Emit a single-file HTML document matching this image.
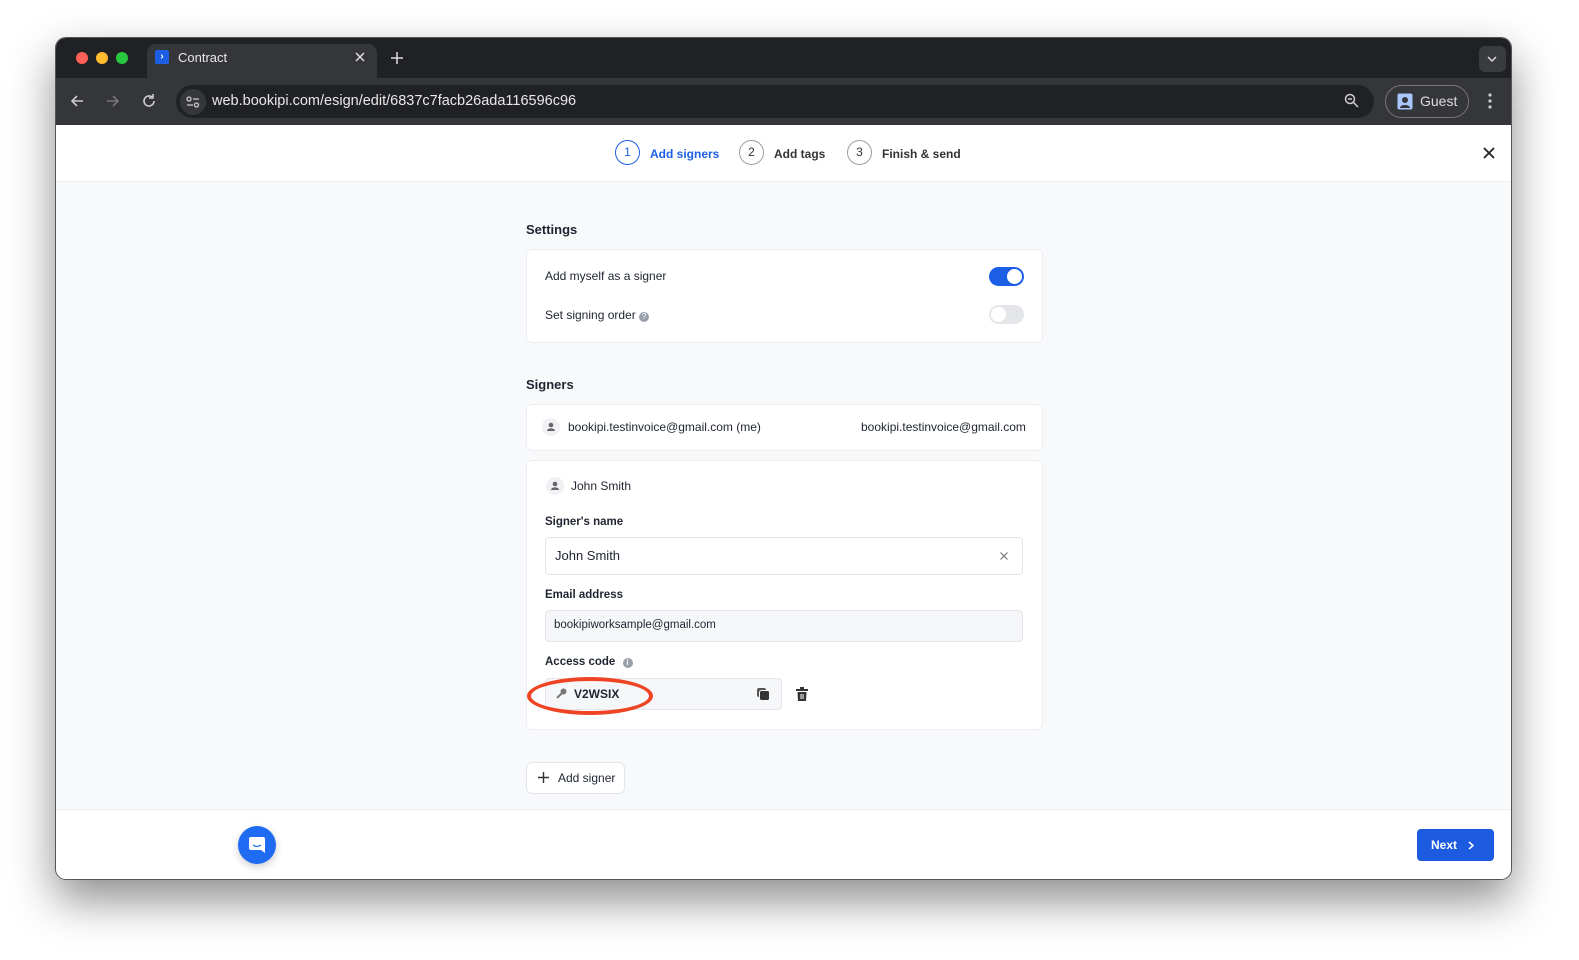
<!DOCTYPE html>
<html><head><meta charset="utf-8"><style>
*{box-sizing:border-box;margin:0;padding:0}
html,body{width:1579px;height:960px}
body{background:#fff;font-family:"Liberation Sans",sans-serif;position:relative;overflow:hidden}
.a{position:absolute}
.win{left:55px;top:37px;width:1457px;height:843px;border-radius:11px;overflow:hidden;background:#f8f9fb;box-shadow:0 20px 45px rgba(0,0,0,.45);border:1px solid #555}
.t{font-size:12px;color:#1f2430}
.b{font-weight:bold}
.card{background:#fff;border:1px solid #eceef2;border-radius:6px}
.tog{width:35px;height:19px;border-radius:10px}
.step{width:25px;height:25px;border-radius:50%;border:1px solid #9aa0aa;font-size:12px;text-align:center;line-height:23px;color:#333}
</style></head><body>
<div class="a win">
 <div class="a" style="left:0;top:0;width:1457px;height:40px;background:#202124"></div>
 <div class="a" style="left:20px;top:14px;width:12px;height:12px;border-radius:50%;background:#fe5f57"></div>
 <div class="a" style="left:40px;top:14px;width:12px;height:12px;border-radius:50%;background:#febc2e"></div>
 <div class="a" style="left:60px;top:14px;width:12px;height:12px;border-radius:50%;background:#28c840"></div>
 <div class="a" style="left:91px;top:6px;width:230px;height:36px;background:#35363a;border-radius:9px 9px 0 0"></div>
 <div class="a" style="left:99px;top:12px;width:14px;height:14px;background:#1c5fe5;border-radius:2px;color:#fff;font-size:10px;font-weight:bold;text-align:center;line-height:14px">&#8250;</div>
 <div class="a" style="left:122px;top:12px;color:#e8e8e8;font-size:13px">Contract</div>
 <svg class="a" style="left:299px;top:14px" width="10" height="10"><path d="M1 1L9 9M9 1L1 9" stroke="#ddd" stroke-width="1.5"/></svg>
 <svg class="a" style="left:335px;top:14px" width="12" height="12"><path d="M6 0V12M0 6H12" stroke="#ddd" stroke-width="1.5"/></svg>
 <div class="a" style="left:1423px;top:8px;width:27px;height:26px;background:#3a3b3e;border-radius:6px"></div>
 <svg class="a" style="left:1431px;top:17px" width="10" height="8"><path d="M1 2L5 6L9 2" stroke="#ddd" stroke-width="1.5" fill="none"/></svg>
 <div class="a" style="left:0;top:40px;width:1457px;height:47px;background:#35363a"></div>
 <svg class="a" style="left:14px;top:56px" width="14" height="14"><path d="M13 7H2M7 2L2 7L7 12" stroke="#ccc" stroke-width="1.6" fill="none"/></svg>
 <svg class="a" style="left:50px;top:56px" width="14" height="14"><path d="M1 7H12M7 2L12 7L7 12" stroke="#777" stroke-width="1.6" fill="none"/></svg>
 <svg class="a" style="left:86px;top:56px" width="14" height="14"><path d="M12 7A5 5 0 1 1 10 3M11 0V4H7" stroke="#ccc" stroke-width="1.6" fill="none"/></svg>
 <div class="a" style="left:120px;top:47px;width:1198px;height:33px;background:#202124;border-radius:17px"></div>
 <div class="a" style="left:124px;top:51px;width:26px;height:26px;background:#36373a;border-radius:50%"></div>
 <svg class="a" style="left:130px;top:57px" width="14" height="14"><circle cx="3" cy="4" r="2" stroke="#ccc" fill="none" stroke-width="1.3"/><path d="M7 4H13M1 10H7" stroke="#ccc" stroke-width="1.3"/><circle cx="10.5" cy="10" r="2" stroke="#ccc" fill="none" stroke-width="1.3"/></svg>
 <div class="a" style="left:156px;top:55px;color:#e8e8e8;font-size:14.5px">web.bookipi.com/esign/edit/6837c7facb26ada116596c96</div>
 <svg class="a" style="left:1288px;top:55px" width="16" height="16"><circle cx="6" cy="6" r="4.5" stroke="#ccc" fill="none" stroke-width="1.5"/><path d="M9.5 9.5L14 14M4 6H8" stroke="#ccc" stroke-width="1.5"/></svg>
 <div class="a" style="left:1329px;top:47px;width:84px;height:33px;border:1px solid #777;border-radius:17px"></div>
 <svg class="a" style="left:1341px;top:55px" width="16" height="17"><rect x="0.5" y="0.5" width="15" height="16" rx="2" fill="#a8c7fa"/><circle cx="8" cy="7" r="3" fill="#35363a"/><path d="M3 15C3 11 13 11 13 15" fill="#35363a"/></svg>
 <div class="a" style="left:1364px;top:55px;color:#ddd;font-size:14px">Guest</div>
 <svg class="a" style="left:1432px;top:55px" width="4" height="16"><circle cx="2" cy="2" r="1.6" fill="#ccc"/><circle cx="2" cy="8" r="1.6" fill="#ccc"/><circle cx="2" cy="14" r="1.6" fill="#ccc"/></svg>
 <!-- header -->
 <div class="a" style="left:0;top:87px;width:1457px;height:57px;background:#fff;border-bottom:1px solid #eceef2"></div>
 <div class="a step" style="left:559px;top:102px;border-color:#1c5fe5;color:#1c5fe5">1</div>
 <div class="a t b" style="left:594px;top:109px;color:#1c5fe5">Add signers</div>
 <div class="a step" style="left:683px;top:102px">2</div>
 <div class="a t b" style="left:718px;top:109px;color:#333">Add tags</div>
 <div class="a step" style="left:791px;top:102px">3</div>
 <div class="a t b" style="left:826px;top:109px;color:#333">Finish &amp; send</div>
 <svg class="a" style="left:1427px;top:109px" width="12" height="12"><path d="M1 1L11 11M11 1L1 11" stroke="#222" stroke-width="1.8"/></svg>
 <!-- settings -->
 <div class="a b" style="left:470px;top:184px;font-size:13px;color:#1f2430">Settings</div>
 <div class="a card" style="left:470px;top:211px;width:517px;height:94px"></div>
 <div class="a t" style="left:489px;top:231px">Add myself as a signer</div>
 <div class="a tog" style="left:933px;top:229px;background:#1c5fe5"><div class="a" style="left:18px;top:2px;width:15px;height:15px;border-radius:50%;background:#fff"></div></div>
 <div class="a t" style="left:489px;top:270px">Set signing order <span style="display:inline-block;width:10px;height:10px;border-radius:50%;background:#9aa0aa;color:#fff;font-size:8px;text-align:center;line-height:10px;vertical-align:0">?</span></div>
 <div class="a tog" style="left:933px;top:267px;background:#e4e6ea"><div class="a" style="left:2px;top:2px;width:15px;height:15px;border-radius:50%;background:#fff"></div></div>
 <div class="a b" style="left:470px;top:339px;font-size:13px;color:#1f2430">Signers</div>
 <div class="a card" style="left:470px;top:366px;width:517px;height:47px"></div>
 <svg class="a" style="left:486px;top:380px" width="18" height="18"><circle cx="9" cy="9" r="9" fill="#f0f1f4"/><circle cx="9" cy="7" r="2.3" fill="#666"/><path d="M5 13C5 9.5 13 9.5 13 13Z" fill="#666"/></svg>
 <div class="a t" style="left:512px;top:382px">bookipi.testinvoice@gmail.com (me)</div>
 <div class="a t" style="left:805px;top:382px">bookipi.testinvoice@gmail.com</div>
 <div class="a card" style="left:470px;top:422px;width:517px;height:270px"></div>
 <svg class="a" style="left:490px;top:439px" width="18" height="18"><circle cx="9" cy="9" r="9" fill="#f0f1f4"/><circle cx="9" cy="7" r="2.3" fill="#666"/><path d="M5 13C5 9.5 13 9.5 13 13Z" fill="#666"/></svg>
 <div class="a t" style="left:515px;top:441px">John Smith</div>
 <div class="a t b" style="left:489px;top:478px;font-size:11.5px">Signer's name</div>
 <div class="a" style="left:489px;top:499px;width:478px;height:38px;background:#fff;border:1px solid #e3e5ea;border-radius:4px"></div>
 <div class="a" style="left:499px;top:510px;font-size:13px;color:#1f2430">John Smith</div>
 <svg class="a" style="left:944px;top:514px" width="8" height="8"><path d="M0.5 0.5L7.5 7.5M7.5 0.5L0.5 7.5" stroke="#777" stroke-width="1.2"/></svg>
 <div class="a t b" style="left:489px;top:551px;font-size:11.5px">Email address</div>
 <div class="a" style="left:489px;top:572px;width:478px;height:32px;background:#f6f7f9;border:1px solid #e3e5ea;border-radius:4px"></div>
 <div class="a t" style="left:498px;top:581px;font-size:11.5px">bookipiworksample@gmail.com</div>
 <div class="a t b" style="left:489px;top:618px;font-size:11.5px">Access code <span style="display:inline-block;width:10px;height:10px;border-radius:50%;background:#9aa0aa;color:#fff;font-size:8px;text-align:center;line-height:10px;margin-left:4px">i</span></div>
 <div class="a" style="left:489px;top:640px;width:237px;height:32px;background:#f6f7f9;border:1px solid #e3e5ea;border-radius:4px"></div>
 <svg class="a" style="left:500px;top:650px" width="11" height="11"><circle cx="7.5" cy="3.5" r="3" fill="#777"/><path d="M6 5L1 10" stroke="#777" stroke-width="2"/></svg>
 <div class="a t b" style="left:518px;top:649px">V2WSIX</div>
 <svg class="a" style="left:701px;top:650px" width="13" height="13"><rect x="0" y="0" width="9" height="9" rx="2" fill="#555"/><rect x="2.5" y="2.5" width="10" height="10" rx="2" fill="#333" stroke="#f6f7f9" stroke-width="1"/></svg>
 <svg class="a" style="left:740px;top:649px" width="12" height="14"><rect x="0" y="2" width="12" height="2" fill="#333"/><rect x="4" y="0" width="4" height="2" fill="#333"/><path d="M1.5 5H10.5L10 14H2Z" fill="#333"/><path d="M5 7V12M7 7V12" stroke="#fff" stroke-width="1"/></svg>
 <div class="a" style="left:471px;top:639px;width:126px;height:38px;border:4px solid #ef4423;border-radius:50%"></div>
 <div class="a card" style="left:470px;top:724px;width:99px;height:32px;border-color:#e3e5ea"></div>
 <svg class="a" style="left:482px;top:734px" width="11" height="11"><path d="M5.5 0V11M0 5.5H11" stroke="#333" stroke-width="1.4"/></svg>
 <div class="a t" style="left:502px;top:733px">Add signer</div>
 <!-- footer -->
 <div class="a" style="left:0;top:771px;width:1457px;height:72px;background:#fff;border-top:1px solid #eceef2"></div>
 <div class="a" style="left:182px;top:788px;width:38px;height:38px;border-radius:50%;background:#1f6cf2;box-shadow:0 3px 8px rgba(0,0,0,.2)"></div>
 <svg class="a" style="left:193px;top:799px" width="16" height="17"><path d="M2 0H14A2 2 0 0 1 16 2V16L12 13H2A2 2 0 0 1 0 11V2A2 2 0 0 1 2 0Z" fill="#fff"/><path d="M4 8Q8 11 12 8" stroke="#1f6cf2" stroke-width="1.3" fill="none"/></svg>
 <div class="a" style="left:1361px;top:791px;width:77px;height:32px;background:#1c5be0;border-radius:4px;color:#fff;font-size:12px;font-weight:bold;line-height:32px;padding-left:14px">Next</div>
 <svg class="a" style="left:1412px;top:803px" width="6" height="9"><path d="M1 1L5 4.5L1 8" stroke="#fff" stroke-width="1.5" fill="none"/></svg>
</div>
</body></html>
